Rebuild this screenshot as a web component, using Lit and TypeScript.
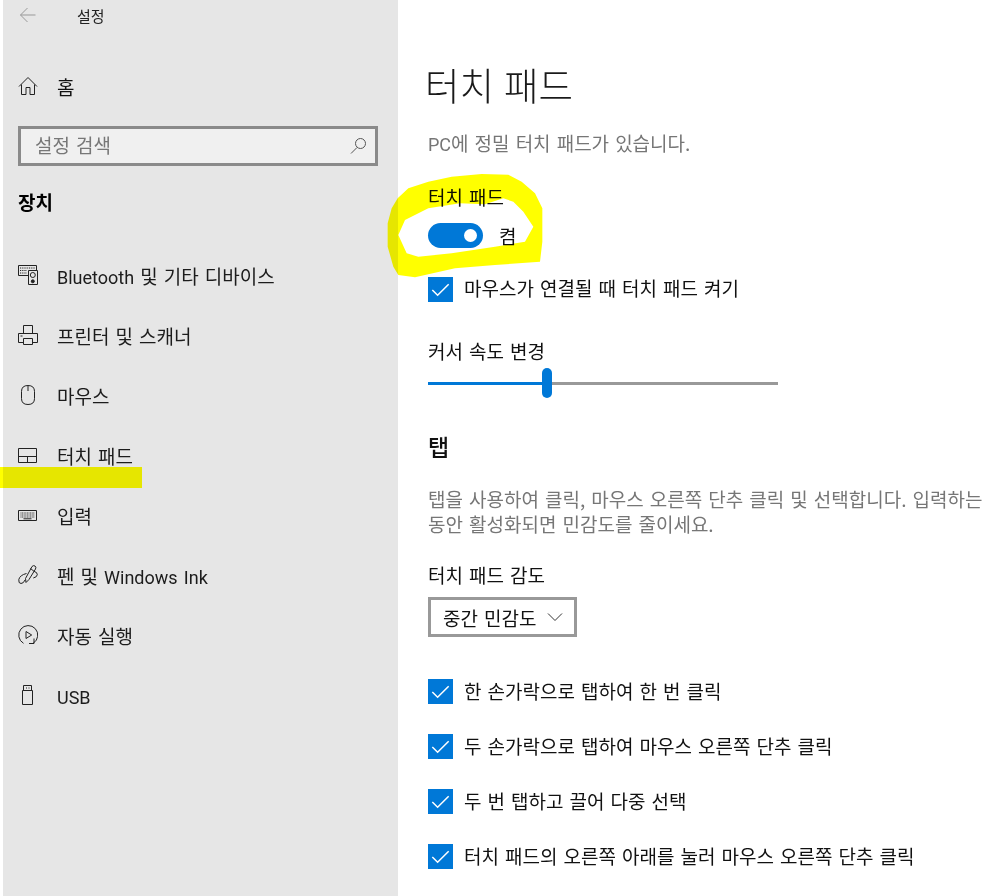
import { LitElement, html, css, svg } from "lit";
import { customElement } from "lit/decorators.js";

const ic = (body: unknown) => html`<svg class="ic" viewBox="0 0 20 20" fill="none" stroke="#222" stroke-width="1">${body}</svg>`;

const nav: [unknown, unknown][] = [
  [html`<span class="lat">Bluetooth</span> 및 기타 디바이스`, svg`<path d="M10 10.500H.5V.5h18v5"/><path stroke-dasharray="1 .8" d="M2 3h15M2 5.500h7M2 8h7"/><path d="M10.500 5.500h9v14h-9z"/><circle cx="14.800" cy="10" r="2.500"/><circle cx="14.800" cy="16.300" r="1.500" fill="#222"/>`],
  ["프린터 및 스캐너", svg`<path d="M5.500 8V.5h9V8M5.500 17.500H.5V8.500h19v9h-5M5.500 13.500h9v6h-9zM2.500 11h2"/>`],
  ["마우스", svg`<path d="M3.500 6.500q0-6 6.500-6t6.500 6v7q0 6-6.500 6t-6.500-6zM10 1v5"/>`],
  ["터치 패드", svg`<path d="M.5 3.500h18v14H.5zM.5 11.500h18M9.500 11.500v6"/>`],
  ["입력", svg`<path d="M.5 5.500h18v10H.5z"/><path stroke-dasharray="1 .6" stroke="#333" d="M2.500 8h14M2.500 10h14M2.500 12h14"/><path d="M5.500 13.800h8"/>`],
  [html`펜 및 <span class="lat">Windows Ink</span>`, svg`<path d="M14 1.500q1.500-1.500 3-.5t.5 3L11 14.500 8 17.500 7.500 13.500zM12.500 3.500l3.500 2.800M8.500 8.500Q2 10 .8 14.500q-.5 4 2.200 4 2.500 0 4-3.500M16 6.300q3.500 1 3.300 3.400t-4 3.300"/>`],
  ["자동 실행", svg`<path d="M5.500 18.300A9.500 9.500 0 1 1 15.500 18M16 13.500v5h-5"/><path d="M8 6.500v7l5.700-3.500z"/>`],
  [html`<span class="lat">USB</span>`, svg`<path d="M4.500 5.500h10v14h-10zM5.500 5.500v-5h8v5M8 3h1M10.500 3h1"/>`],
];

const checks = [
  "한 손가락으로 탭하여 한 번 클릭",
  "두 손가락으로 탭하여 마우스 오른쪽 단추 클릭",
  "두 번 탭하고 끌어 다중 선택",
  "터치 패드의 오른쪽 아래를 눌러 마우스 오른쪽 단추 클릭",
];

const checkbox = html`<span class="box"><svg viewBox="0 0 26 26" fill="none" stroke="#fff" stroke-width="1.600"><path d="M4.500 13.500 10 19 21.500 7.500"/></svg></span>`;

@customElement("app-root")
export class AppRoot extends LitElement {
  static styles = css`
    :host {
      display: block;
      position: relative;
      width: 1005px;
      height: 896px;
      overflow: hidden;
      background: #fff;
      font-family: "Noto Sans CJK KR", "Noto Sans", sans-serif;
      color: #111;
      font-size: 19px;
      word-spacing: 1.8px;
    }
    .lat { font-family: Roboto, "Noto Sans", sans-serif; font-size: 18px; }
    .page { display: flex; height: 896px; padding-left: 3px; box-sizing: border-box; }
    .side { width: 395px; flex: none; background: #e6e6e6; box-sizing: border-box; padding: 0 20px 0 17px; display: flex; flex-direction: column; }
    .top { height: 32px; display: flex; align-items: center; color: #222; font-size: 15px; padding-bottom: 2px; box-sizing: border-box; }
    .top svg { width: 16px; height: 16px; margin-right: 41px; }
    .home { margin-top: 24px; height: 60px; display: flex; align-items: center; }
    .ic { width: 20px; height: 20px; flex: none; margin-right: 19px; margin-left: -2px; }
    .search { margin-top: 10px; height: 40px; border: 3px solid #8a8a8a; background: #f0f0f0; box-sizing: border-box; display: flex; align-items: center; justify-content: space-between; padding: 0 8px 3px 14px; margin-left: -2px; color: #777; }
    .search svg { width: 17px; height: 17px; margin-top: 2px; }
    .cat { font-weight: 700; margin-top: 23px; margin-left: -2px; height: 26px; line-height: 26px; color: #000; }
    .nav { margin-top: 30px; display: flex; flex-direction: column; }
    .row { height: 60px; display: flex; align-items: center; color: #1c1c1c; white-space: nowrap; }
    .main { flex: 1; padding-left: 30px; min-width: 0; }
    h1 { font-weight: 300; font-size: 37.5px; margin: 59px 0 0 -3px; height: 50px; line-height: 50px; color: #1a1a1a; }
    .muted { color: #767676; }
    .desc { margin-top: 21px; height: 26px; line-height: 26px; }
    .label { line-height: 26px; height: 26px; }
    .l1 { margin-top: 28px; }
    .toggle { display: flex; align-items: center; margin-top: 13px; height: 25px; }
    .track { width: 55px; height: 25px; border-radius: 13px; background: #0078d7; position: relative; margin-right: 16px; }
    .track::after { content: ""; position: absolute; right: 6px; top: 6px; width: 13px; height: 13px; border-radius: 50%; background: #fff; }
    .check { display: flex; align-items: center; height: 25px; white-space: nowrap; }
    .check > span:last-child { padding-bottom: 3px; }
    .box { width: 25px; height: 25px; background: #0078d7; margin-right: 11px; flex: none; display: block; }
    .box svg { display: block; width: 25px; height: 25px; }
    .c1 { margin-top: 29px; }
    .check.c1 > span:last-child { padding-bottom: 5px; }
    .l2 { margin-top: 36px; }
    .slider { margin-top: 4px; width: 350px; height: 30px; display: flex; align-items: center; position: relative; }
    .fill { width: 119px; height: 3px; background: #0078d7; }
    .rest { flex: 1; height: 3px; background: #999; }
    .thumb { position: absolute; left: 114px; top: 0; width: 10px; height: 30px; border-radius: 5px; background: #0078d7; }
    h2 { font-size: 23px; font-weight: 500; margin: 32px 0 0; height: 32px; line-height: 32px; color: #111; }
    .para { margin-top: 24px; line-height: 25px; white-space: nowrap; }
    .l3 { margin-top: 26px; }
    .select { margin-top: 9px; width: 149px; height: 40px; border: 3px solid #999; box-sizing: border-box; display: flex; align-items: center; justify-content: space-between; padding: 0 11px 0 12px; white-space: nowrap; }
    .select svg { width: 16px; height: 16px; }
    .checks { margin-top: 42px; display: flex; flex-direction: column; gap: 30px; }
    .hl { position: absolute; left: 0; top: 467px; width: 142px; height: 21px; background: #ffff00; mix-blend-mode: multiply; }
    .scribble { position: absolute; left: 385px; top: 170px; width: 165px; height: 115px; pointer-events: none; mix-blend-mode: multiply; }
  `;

  render() {
    return html`
      <div class="page">
        <aside class="side">
          <div class="top">
            <svg viewBox="0 0 16 16" fill="none" stroke="#999" stroke-width="1"><path d="M15.500 8H.5M7.500 1 .5 8l7 7"/></svg>
            <span>설정</span>
          </div>
          <div class="home">
            ${ic(svg`<path d="M1 10.500 10 1.500l9 9M3.500 8.500V18.500h4.500v-7h4v7h4.500V8.500"/>`)}
            <span>홈</span>
          </div>
          <div class="search">
            <span>설정 검색</span>
            <svg viewBox="0 0 17 17" fill="none" stroke="#555" stroke-width="1"><circle cx="10.500" cy="6.500" r="5"/><path d="M7 10.500 1 16.500"/></svg>
          </div>
          <div class="cat">장치</div>
          <nav class="nav">
            ${nav.map(([t, i]) => html`<div class="row">${ic(i)}<span>${t}</span></div>`)}
          </nav>
        </aside>
        <main class="main">
          <h1>터치 패드</h1>
          <div class="muted desc"><span class="lat">PC</span>에 정밀 터치 패드가 있습니다.</div>
          <div class="label l1">터치 패드</div>
          <div class="toggle"><span class="track"></span><span>켬</span></div>
          <div class="check c1">${checkbox}<span>마우스가 연결될 때 터치 패드 켜기</span></div>
          <div class="label l2">커서 속도 변경</div>
          <div class="slider"><span class="fill"></span><span class="rest"></span><span class="thumb"></span></div>
          <h2>탭</h2>
          <div class="muted para">탭을 사용하여 클릭, 마우스 오른쪽 단추 클릭 및 선택합니다. 입력하는<br />동안 활성화되면 민감도를 줄이세요.</div>
          <div class="label l3">터치 패드 감도</div>
          <div class="select">
            <span>중간 민감도</span>
            <svg viewBox="0 0 16 16" fill="none" stroke="#333" stroke-width="1"><path d="M1 4.500l7 7 7-7"/></svg>
          </div>
          <div class="checks">
            ${checks.map((c) => html`<div class="check">${checkbox}<span>${c}</span></div>`)}
          </div>
        </main>
      </div>
      <div class="hl"></div>
      <svg class="scribble" viewBox="0 0 495 345">
        <path fill="#ffff00" fill-rule="evenodd" d="M38 85 70 55 130 35 200 20 290 12 370 14 410 35 450 70 472 115 472 215 465 275 330 285 210 295 90 322 40 315 25 290 8 230 8 160 20 115ZM40 195 60 150 130 115 225 100 300 103 355 85 385 95 415 125 445 170 420 215 330 230 200 250 100 260 65 250Z"/>
      </svg>
    `;
  }
}
